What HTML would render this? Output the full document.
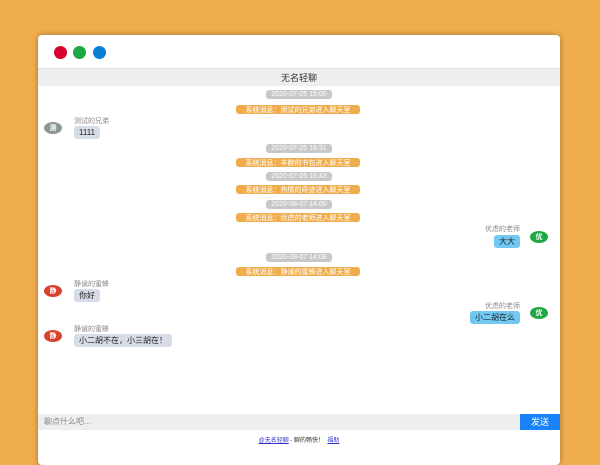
<!DOCTYPE html><html><head><meta charset="utf-8"><style>
*{margin:0;padding:0;box-sizing:border-box}
body{width:600px;height:450px;background:#f0ad4e;position:relative;overflow:hidden;font-family:"Liberation Sans","Noto Sans CJK SC",sans-serif}
.win{position:absolute;left:38px;top:35px;width:522px;height:430px;background:#fff;border-radius:4px;box-shadow:0 0 6px rgba(0,0,0,.35)}
.dot{position:absolute;top:11px;width:13px;height:13px;border-radius:50%}
.hd{position:absolute;left:0;top:33px;width:522px;height:18px;background:#eceeef;border-top:1px solid #ddd;font-size:9px;color:#333;display:flex;align-items:center;justify-content:center}
.a{position:absolute}
.ts,.sy,.av,.bb{display:flex;align-items:center;justify-content:center;white-space:nowrap}
.ts{position:absolute;left:228px;width:66px;height:9px;background:#c8c8c8;border-radius:3px;color:#fff;font-size:7px}
.sy{position:absolute;left:198px;width:124px;height:9px;background:#f0ad4e;border-radius:3px;color:#fff;font-size:7px}
.av{position:absolute;width:18px;height:12px;border-radius:50%;color:#fff;font-size:7px;font-weight:bold}
.nm{position:absolute;font-size:7px;color:#888;line-height:8px}
.bb{position:absolute;height:13px;border-radius:3px;font-size:8px;padding:0 5px;color:#222;background:#d6dde6}
.r{background:#70c8f3}
</style></head><body>
<div class="win">
<div class="dot" style="left:16px;background:#d8002e"></div>
<div class="dot" style="left:35px;background:#1fa743"></div>
<div class="dot" style="left:55px;background:#0a7fd4"></div>
<div class="hd">无名轻聊</div>
<div class="ts" style="top:55px">2020-07-25 15:00</div>
<div class="sy" style="top:70px">系统消息：测试的兄弟进入聊天室</div>
<div class="av" style="left:6px;top:87px;background:#8a9a90">测</div>
<div class="nm" style="left:36px;top:83px">测试的兄弟</div>
<div class="bb" style="left:36px;top:91px">1111</div>
<div class="ts" style="top:109px">2020-07-25 16:31</div>
<div class="sy" style="top:123px">系统消息：丰腴的书包进入聊天室</div>
<div class="ts" style="top:137px">2020-07-25 16:43</div>
<div class="sy" style="top:150px">系统消息：热情的奇迹进入聊天室</div>
<div class="ts" style="top:165px">2020-08-07 14:00</div>
<div class="sy" style="top:178px">系统消息：优虑的老师进入聊天室</div>
<div class="nm" style="right:40px;top:191px">优虑的老师</div>
<div class="bb r" style="right:40px;top:200px">大大</div>
<div class="av" style="left:492px;top:196px;background:#1fa743">优</div>
<div class="ts" style="top:218px">2020-08-07 14:08</div>
<div class="sy" style="top:232px">系统消息：静谧的蜜蜂进入聊天室</div>
<div class="av" style="left:6px;top:250px;background:#d9412f">静</div>
<div class="nm" style="left:36px;top:246px">静谧的蜜蜂</div>
<div class="bb" style="left:36px;top:254px">你好</div>
<div class="nm" style="right:40px;top:268px">优虑的老师</div>
<div class="bb r" style="right:40px;top:276px">小二胡在么</div>
<div class="av" style="left:492px;top:272px;background:#1fa743">优</div>
<div class="av" style="left:6px;top:295px;background:#d9412f">静</div>
<div class="nm" style="left:36px;top:291px">静谧的蜜蜂</div>
<div class="bb" style="left:36px;top:299px">小二胡不在，小三胡在！</div>
<div class="a" style="left:0;top:379px;width:482px;height:16px;background:#eceeef;font-size:8px;color:#888;line-height:16px;padding-left:6px">聊点什么吧...</div>
<div class="a" style="left:482px;top:379px;width:40px;height:16px;background:#1a82f7;color:#fff;font-size:9px;text-align:center;line-height:16px">发送</div>
<div class="a" style="left:0;top:400px;width:522px;text-align:center;font-size:6px;color:#333"><u style="color:#33c">@无名轻聊</u> - 聊的畅快！ &nbsp;<u style="color:#33c">福助</u></div>
</div>
</body></html>
